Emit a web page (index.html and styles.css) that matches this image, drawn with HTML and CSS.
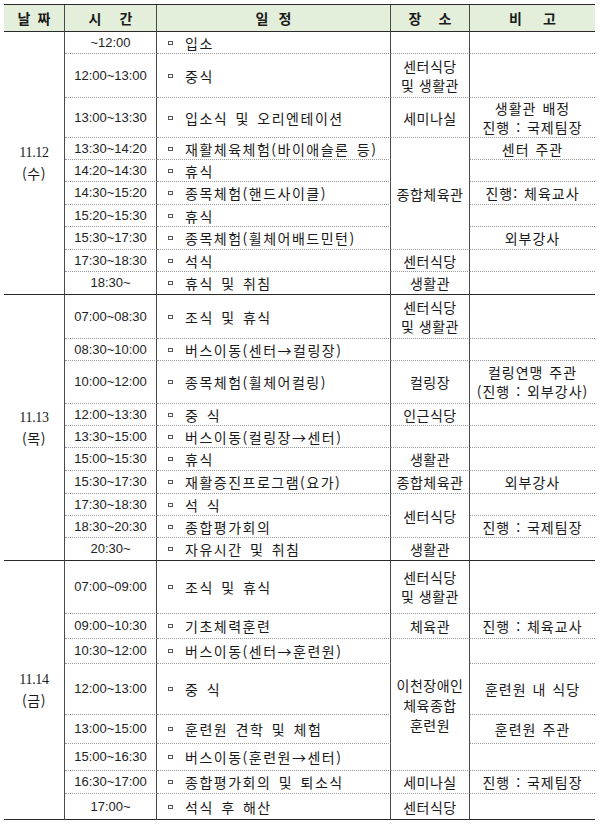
FILE: index.html
```html
<!DOCTYPE html>
<html lang="ko">
<head>
<meta charset="utf-8">
<title>일정표</title>
<link rel="stylesheet" href="styles.css">
</head>
<body>
<div class="sched">
  <div class="c hd g7 cr"><span>날</span><span>짜</span></div>
  <div class="c hd g18 cr"><span>시</span><span>간</span></div>
  <div class="c hd g10 cr"><span>일</span><span>정</span></div>
  <div class="c hd g17 cr"><span>장</span><span>소</span></div>
  <div class="c hd g21"><span>비</span><span>고</span></div>

  <!-- Day 1 -->
  <div class="c date cr end r10"><span class="num">11.12</span><span>(수)</span></div>
  <div class="c time cr">~12:00</div><div class="c plan cr"><i class="bul"></i>입소</div><div class="c cr"></div><div class="c note"></div>
  <div class="c time cr">12:00~13:00</div><div class="c plan cr"><i class="bul"></i>중식</div><div class="c cr two">센터식당<br>및 생활관</div><div class="c note"></div>
  <div class="c time cr">13:00~13:30</div><div class="c plan cr"><i class="bul"></i>입소식 및 오리엔테이션</div><div class="c cr">세미나실</div><div class="c note two">생활관 배정<br>진행 : 국제팀장</div>
  <div class="c time cr">13:30~14:20</div><div class="c plan cr"><i class="bul"></i>재활체육체험(바이애슬론 등)</div><div class="c cr r5">종합체육관</div><div class="c note">센터 주관</div>
  <div class="c time cr">14:20~14:30</div><div class="c plan cr"><i class="bul"></i>휴식</div><div class="c note"></div>
  <div class="c time cr">14:30~15:20</div><div class="c plan cr"><i class="bul"></i>종목체험(핸드사이클)</div><div class="c note">진행: 체육교사</div>
  <div class="c time cr">15:20~15:30</div><div class="c plan cr"><i class="bul"></i>휴식</div><div class="c note"></div>
  <div class="c time cr">15:30~17:30</div><div class="c plan cr"><i class="bul"></i>종목체험(휠체어배드민턴)</div><div class="c note">외부강사</div>
  <div class="c time cr">17:30~18:30</div><div class="c plan cr"><i class="bul"></i>석식</div><div class="c cr">센터식당</div><div class="c note"></div>
  <div class="c time cr end">18:30~</div><div class="c plan cr end"><i class="bul"></i>휴식 및 취침</div><div class="c cr end">생활관</div><div class="c note end"></div>

  <!-- Day 2 -->
  <div class="c date cr end r10"><span class="num">11.13</span><span>(목)</span></div>
  <div class="c time cr">07:00~08:30</div><div class="c plan cr"><i class="bul"></i>조식 및 휴식</div><div class="c cr two">센터식당<br>및 생활관</div><div class="c note"></div>
  <div class="c time cr">08:30~10:00</div><div class="c plan cr"><i class="bul"></i>버스이동(센터→컬링장)</div><div class="c cr"></div><div class="c note"></div>
  <div class="c time cr">10:00~12:00</div><div class="c plan cr"><i class="bul"></i>종목체험(휠체어컬링)</div><div class="c cr">컬링장</div><div class="c note two">컬링연맹 주관<br>(진행 : 외부강사)</div>
  <div class="c time cr">12:00~13:30</div><div class="c plan cr"><i class="bul"></i>중 식</div><div class="c cr">인근식당</div><div class="c note"></div>
  <div class="c time cr">13:30~15:00</div><div class="c plan cr"><i class="bul"></i>버스이동(컬링장→센터)</div><div class="c cr"></div><div class="c note"></div>
  <div class="c time cr">15:00~15:30</div><div class="c plan cr"><i class="bul"></i>휴식</div><div class="c cr">생활관</div><div class="c note"></div>
  <div class="c time cr">15:30~17:30</div><div class="c plan cr"><i class="bul"></i>재활증진프로그램(요가)</div><div class="c cr">종합체육관</div><div class="c note">외부강사</div>
  <div class="c time cr">17:30~18:30</div><div class="c plan cr"><i class="bul"></i>석 식</div><div class="c cr r2">센터식당</div><div class="c note"></div>
  <div class="c time cr">18:30~20:30</div><div class="c plan cr"><i class="bul"></i>종합평가회의</div><div class="c note">진행 : 국제팀장</div>
  <div class="c time cr end">20:30~</div><div class="c plan cr end"><i class="bul"></i>자유시간 및 취침</div><div class="c cr end">생활관</div><div class="c note end"></div>

  <!-- Day 3 -->
  <div class="c date cr end r8"><span class="num">11.14</span><span>(금)</span></div>
  <div class="c time cr">07:00~09:00</div><div class="c plan cr"><i class="bul"></i>조식 및 휴식</div><div class="c cr two">센터식당<br>및 생활관</div><div class="c note"></div>
  <div class="c time cr">09:00~10:30</div><div class="c plan cr"><i class="bul"></i>기초체력훈련</div><div class="c cr">체육관</div><div class="c note">진행 : 체육교사</div>
  <div class="c time cr">10:30~12:00</div><div class="c plan cr"><i class="bul"></i>버스이동(센터→훈련원)</div><div class="c cr r4 three">이천장애인<br>체육종합<br>훈련원</div><div class="c note"></div>
  <div class="c time cr">12:00~13:00</div><div class="c plan cr"><i class="bul"></i>중 식</div><div class="c note">훈련원 내 식당</div>
  <div class="c time cr">13:00~15:00</div><div class="c plan cr"><i class="bul"></i>훈련원 견학 및 체험</div><div class="c note">훈련원 주관</div>
  <div class="c time cr">15:00~16:30</div><div class="c plan cr"><i class="bul"></i>버스이동(훈련원→센터)</div><div class="c note"></div>
  <div class="c time cr">16:30~17:00</div><div class="c plan cr"><i class="bul"></i>종합평가회의 및 퇴소식</div><div class="c cr">세미나실</div><div class="c note">진행 : 국제팀장</div>
  <div class="c time cr end">17:00~</div><div class="c plan cr end"><i class="bul"></i>석식 후 해산</div><div class="c cr end">센터식당</div><div class="c note end"></div>
</div>
</body>
</html>
```

FILE: styles.css
```css
html, body {
  margin: 0;
  padding: 0;
  background: #ffffff;
}

body {
  font-family: "Noto Sans CJK KR", "Noto Sans", sans-serif;
  font-size: 14px;
  color: #1a1a1a;
}

.sched {
  margin: 4px 0 0 4px;
  width: 591px;
  display: grid;
  grid-template-columns: 61px 92px 234px 79px 125px;
  grid-template-rows:
    27px
    22px 44px 40px 22px 22px 23px 22px 23px 22px 23px
    44px 22px 43px 22px 22px 23px 23px 22px 22px 23px
    53px 25px 25px 51px 29px 27px 23px 26px;
  border-top: 1px solid #2a2a2a;
}

.c {
  box-sizing: border-box;
  display: flex;
  align-items: center;
  justify-content: center;
  text-align: center;
  border-bottom: 1px dotted #9a9a9a;
  letter-spacing: 0.5px;
  line-height: 18px;
  white-space: nowrap;
}

.cr {
  border-right: 1px solid #4a4a4a;
}

.end {
  border-bottom: 1px solid #2a2a2a;
}

.hd {
  background: #e3efda;
  font-weight: 700;
  font-size: 14px;
  border-bottom: 1px solid #2a2a2a;
  letter-spacing: 0;
}

.g7 { gap: 7px; }
.g10 { gap: 10px; }
.g17 { gap: 17px; }
.g18 { gap: 18px; }
.g21 { gap: 21px; }

.date {
  flex-direction: column;
  line-height: 21px;
}

.date .num {
  font-family: "Liberation Serif", serif;
  font-size: 14px;
  letter-spacing: -0.3px;
}

.time {
  font-family: "Liberation Sans", Arial, sans-serif;
  font-size: 13px;
  letter-spacing: 0;
  color: #222;
}

.plan {
  justify-content: flex-start;
  padding-left: 11px;
  letter-spacing: 1.5px;
  word-spacing: 2px;
}

.note {
  letter-spacing: 1px;
  word-spacing: 1px;
}

.bul {
  display: inline-block;
  width: 3px;
  height: 2px;
  border: 1px solid #555;
  margin-right: 12px;
}

.two { line-height: 19px; }
.three { line-height: 20px; }

.r2 { grid-row: span 2; }
.r4 { grid-row: span 4; }
.r5 { grid-row: span 5; }
.r8 { grid-row: span 8; }
.r10 { grid-row: span 10; }
```
